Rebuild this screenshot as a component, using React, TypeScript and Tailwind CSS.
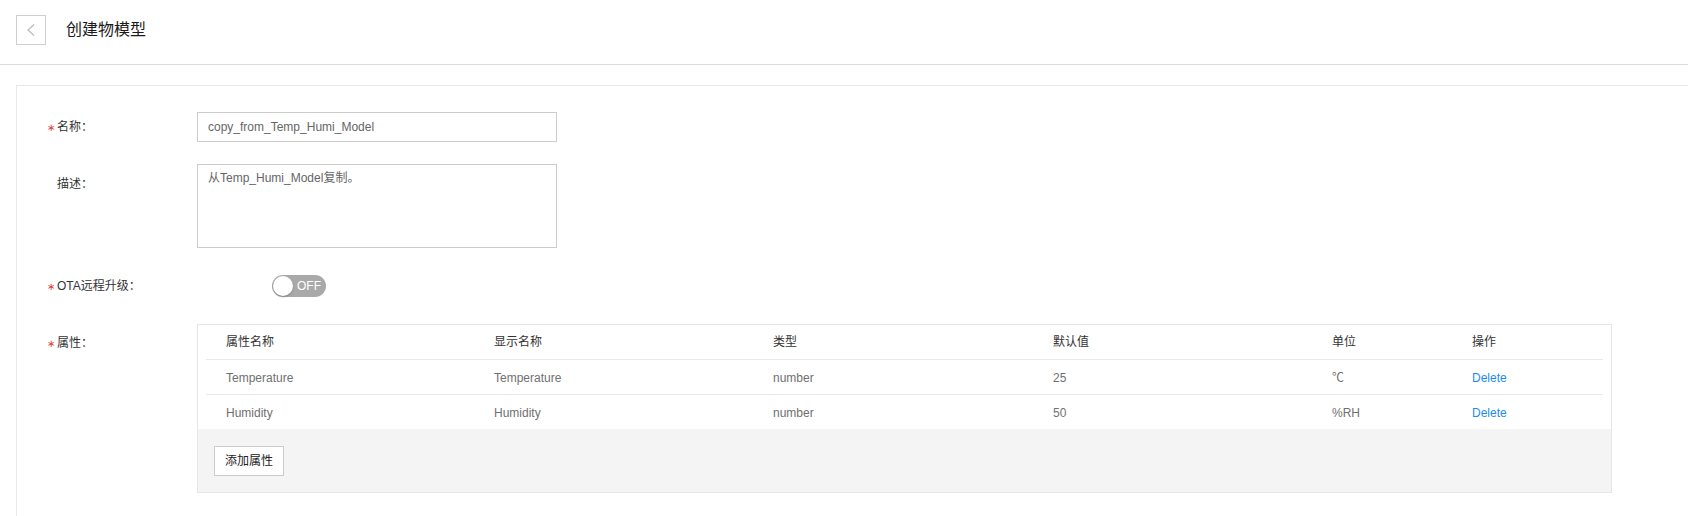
import React from "react";

const rows = [
  { name: "Temperature", display: "Temperature", type: "number", def: "25", unit: "℃" },
  { name: "Humidity", display: "Humidity", type: "number", def: "50", unit: "%RH" },
];

function Req() {
  return <span className="text-[#e4393c] text-[10px] w-[10px] inline-block">∗</span>;
}

export default function App() {
  return (
    <div className="w-[1688px] h-[516px] overflow-hidden bg-white font-['Liberation_Sans','Noto_Sans_CJK_SC',sans-serif] text-[12px] text-[#333]">
      {/* header */}
      <div className="h-[65px] border-b border-[#dcdcdc] flex items-start pt-[15px] pl-[16px]">
        <button className="w-[30px] h-[30px] border border-[#cfcfcf] flex items-center justify-center bg-white">
          <svg width="10" height="14" viewBox="0 0 10 14" fill="none">
            <polyline points="8,1.5 2,7 8,12.5" stroke="#bdbdbd" strokeWidth="1.3" />
          </svg>
        </button>
        <div className="ml-[20px] h-[30px] flex items-center text-[16px] text-[#1a1a1a]">创建物模型</div>
      </div>

      {/* card */}
      <div className="mt-[20px] ml-[16px] border-l border-t border-[#e8e8e8] pt-[26px] pl-[30px] pb-[40px]">
        {/* name */}
        <div className="flex">
          <div className="w-[150px] h-[30px] flex items-center leading-[17px]">
            <Req />
            <span>名称：</span>
          </div>
          <div className="w-[360px] h-[30px] border border-[#cccccc] px-[10px] flex items-center text-[#666]">
            copy_from_Temp_Humi_Model
          </div>
        </div>

        {/* desc */}
        <div className="flex mt-[22px]">
          <div className="w-[150px] pt-[12px] leading-[17px] flex">
            <span className="w-[10px] inline-block" />
            <span>描述：</span>
          </div>
          <div className="w-[360px] h-[84px] border border-[#cccccc] px-[10px] pt-[5px] leading-[17px] text-[#666]">
            从Temp_Humi_Model复制。
          </div>
        </div>

        {/* OTA */}
        <div className="flex mt-[27px]">
          <div className="w-[150px] h-[22px] flex items-center leading-[17px]">
            <Req />
            <span>OTA远程升级：</span>
          </div>
          <div className="ml-[75px] w-[54px] h-[22px] rounded-full bg-[#a9a9a9] flex items-center pl-[1px]">
            <div className="w-[20px] h-[20px] rounded-full bg-white shadow-[0_1px_2px_rgba(0,0,0,0.25)]" />
            <span className="ml-[4px] text-white text-[12px]">OFF</span>
          </div>
        </div>

        {/* attributes */}
        <div className="flex mt-[27px] items-start">
          <div className="w-[150px] mt-[11px] h-[17px] leading-[17px] flex items-center">
            <Req />
            <span>属性：</span>
          </div>
          <div className="w-[1415px] border border-[#e6e6e6]">
            <div className="px-[8px] bg-white">
              <div className="grid grid-cols-[268px_279px_280px_279px_140px_1fr] h-[35px] border-b border-[#e8e8e8] items-center text-[#333]">
                <div className="pl-[20px]">属性名称</div>
                <div className="pl-[20px]">显示名称</div>
                <div className="pl-[20px]">类型</div>
                <div className="pl-[20px]">默认值</div>
                <div className="pl-[20px]">单位</div>
                <div className="pl-[20px]">操作</div>
              </div>
              {rows.map((r, i) => (
                <div
                  key={r.name}
                  className={
                    i === 0
                      ? "grid grid-cols-[268px_279px_280px_279px_140px_1fr] h-[35px] pt-[2px] border-b border-[#e8e8e8] items-center text-[#707070]"
                      : "grid grid-cols-[268px_279px_280px_279px_140px_1fr] h-[34px] pt-[2px] items-center text-[#707070]"
                  }
                >
                  <div className="pl-[20px]">{r.name}</div>
                  <div className="pl-[20px]">{r.display}</div>
                  <div className="pl-[20px]">{r.type}</div>
                  <div className="pl-[20px]">{r.def}</div>
                  <div className="pl-[20px]">{r.unit}</div>
                  <div className="pl-[20px] text-[#1a8cf0]">Delete</div>
                </div>
              ))}
            </div>
            <div className="bg-[#f4f4f4] h-[63px] pt-[17px] pl-[16px]">
              <button className="w-[70px] h-[30px] bg-white border border-[#cccccc] text-[12px] text-[#222]">
                添加属性
              </button>
            </div>
          </div>
        </div>
      </div>
    </div>
  );
}
